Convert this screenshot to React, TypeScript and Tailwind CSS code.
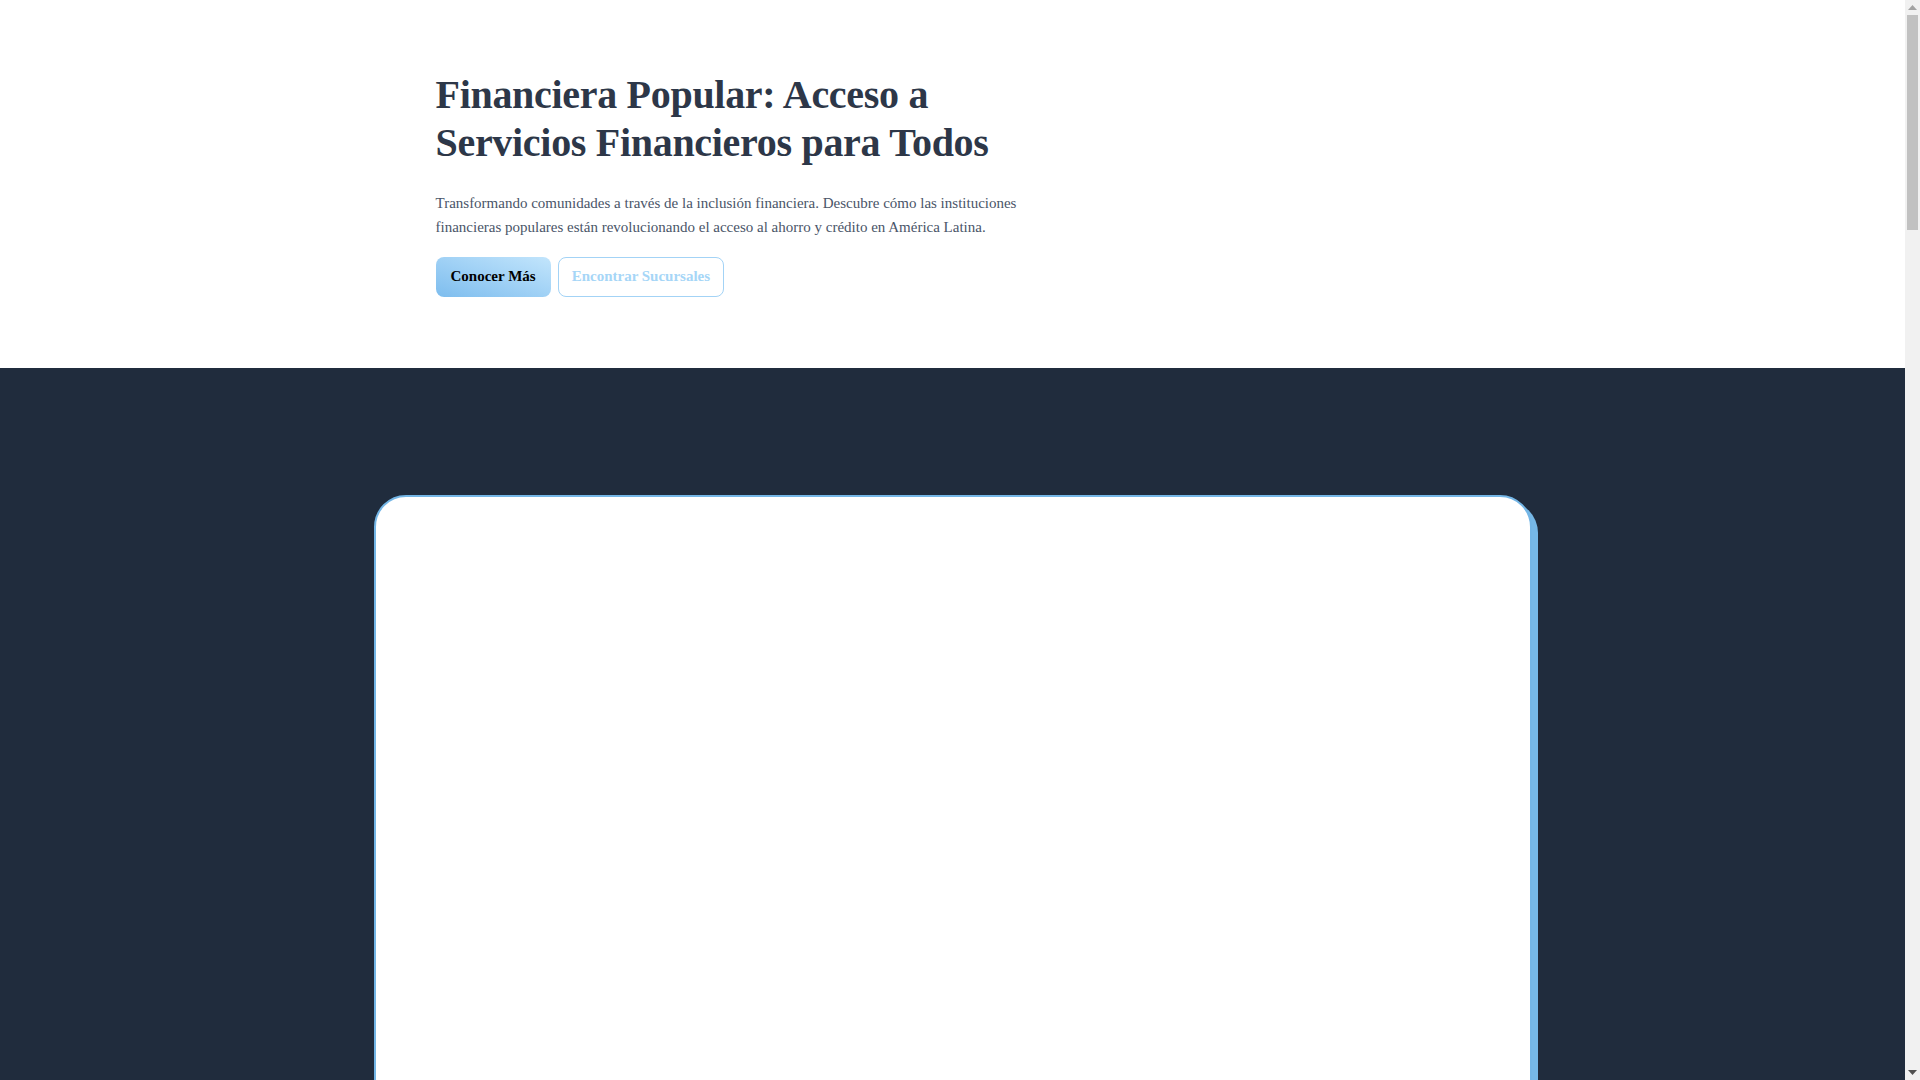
import React from "react";

function Scrollbar() {
  return (
    <div className="fixed top-0 right-0 flex h-screen w-[15px] flex-col bg-[#f1f1f1]">
      <div className="flex h-[15px] items-center justify-center">
        <svg width="9" height="5" viewBox="0 0 9 5"><path d="M0 5 L4.5 0 L9 5 Z" fill="#a3a3a3" /></svg>
      </div>
      <div className="flex-1 px-[2px]">
        <div className="h-[215px] w-full bg-[#c1c1c1]"></div>
      </div>
      <div className="flex h-[15px] items-center justify-center">
        <svg width="9" height="5" viewBox="0 0 9 5"><path d="M0 0 L9 0 L4.5 5 Z" fill="#505050" /></svg>
      </div>
    </div>
  );
}

export default function App() {
  return (
    <div className="h-screen overflow-hidden bg-[#202c3d]" style={{ fontFamily: '"Liberation Serif", "Times New Roman", serif' }}>
      <div className="mr-[15px]">
        <section className="bg-white pt-[71px] pb-[71px]">
          <div className="mx-auto w-[1158px] px-[62px]">
            <div className="max-w-[600px]">
              <h1 className="text-[40px] leading-[48px] font-bold tracking-[-0.3px] text-[#2d3748]">
                Financiera Popular: Acceso a Servicios Financieros para Todos
              </h1>
              <p className="mt-6 text-[15px] leading-6 text-[#4a5568]">
                Transformando comunidades a través de la inclusión financiera. Descubre cómo las instituciones
                financieras populares están revolucionando el acceso al ahorro y crédito en América Latina.
              </p>
              <div className="mt-[18px] flex items-center gap-[7px]">
                <button className="h-10 rounded-lg bg-gradient-to-tr from-[#7dbdee] to-[#c2e5fc] px-[15px] pb-[1px] text-[15px] font-bold text-black">
                  Conocer Más
                </button>
                <button className="h-10 rounded-lg border-[1.5px] border-[#a3d3f6] bg-white px-[13px] pb-[1px] text-[15px] font-bold text-[#a6d6f7]">
                  Encontrar Sucursales
                </button>
              </div>
            </div>
          </div>
        </section>
        <section className="bg-[#202c3d] pt-[127px] pb-24">
          <div className="mx-auto h-[800px] w-[1158px] rounded-[32px] border-2 border-[#74b6e6] bg-white shadow-[6px_6px_0_#76b8e7]"></div>
        </section>
      </div>
      <Scrollbar />
    </div>
  );
}
